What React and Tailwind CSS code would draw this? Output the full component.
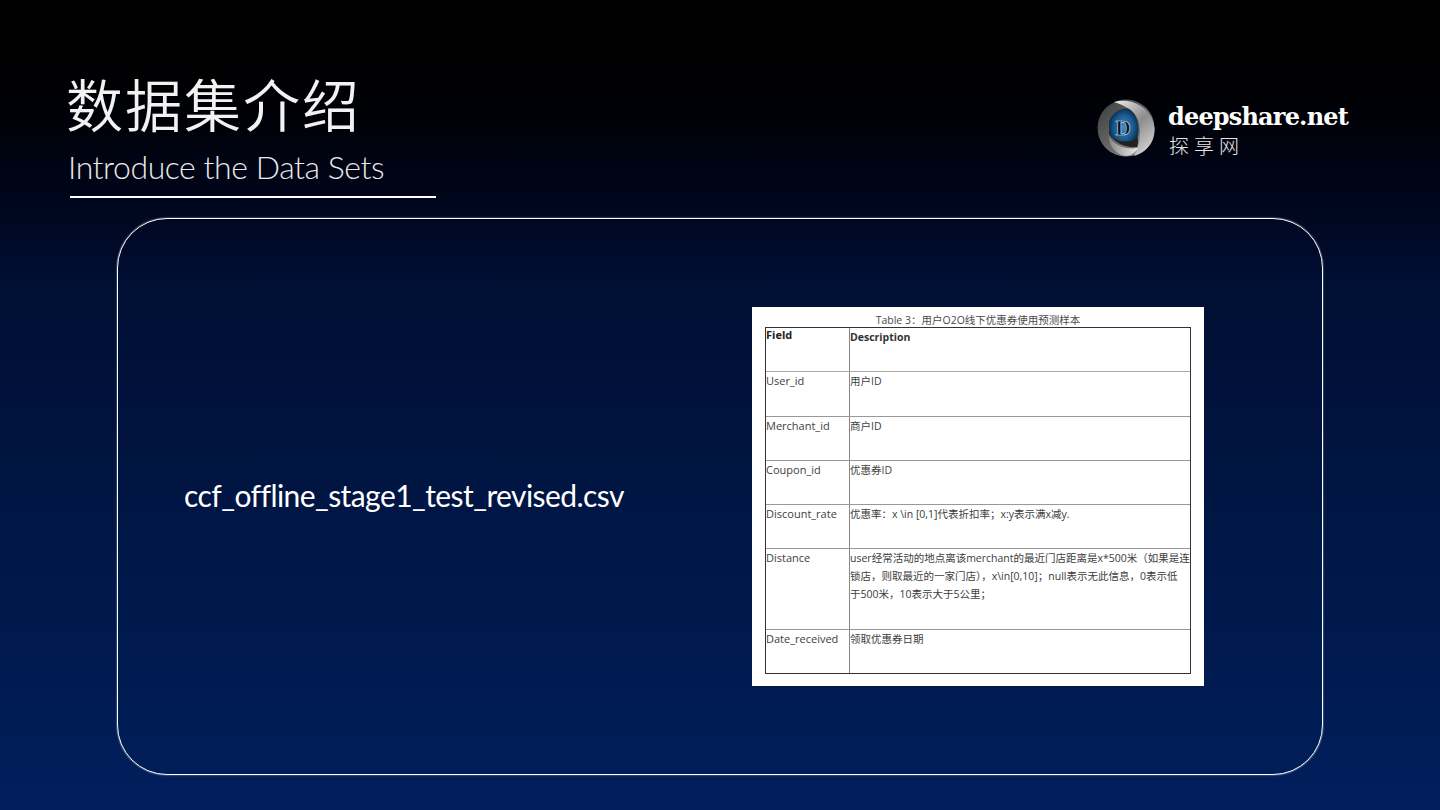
const CJK = '"Noto Sans CJK SC"';

const rows = [
  { field: 'User_id', desc: '用户ID', height: 'h-[45px]' },
  { field: 'Merchant_id', desc: '商户ID', height: 'h-[44px]' },
  { field: 'Coupon_id', desc: '优惠券ID', height: 'h-[44px]' },
  { field: 'Discount_rate', desc: '优惠率：x \\in [0,1]代表折扣率；x:y表示满x减y.', height: 'h-[44px]' },
  {
    field: 'Distance',
    desc: 'user经常活动的地点离该merchant的最近门店距离是x*500米（如果是连\n锁店，则取最近的一家门店），x\\in[0,10]；null表示无此信息，0表示低\n于500米，10表示大于5公里；',
    height: 'h-[81px]',
  },
  { field: 'Date_received', desc: '领取优惠券日期', height: 'h-[43px]' },
];

const Logo = () => (
  <svg width="60" height="60" viewBox="0 0 60 60">
    <defs>
      <linearGradient id="ring" x1="0" y1="0" x2="1" y2="1">
        <stop offset="0" stopColor="#3a3a3a" />
        <stop offset="0.6" stopColor="#6f6f6f" />
        <stop offset="1" stopColor="#a8a8a8" />
      </linearGradient>
      <linearGradient id="swoosh" x1="0.1" y1="0" x2="0.7" y2="1">
        <stop offset="0" stopColor="#e6e6e6" />
        <stop offset="0.5" stopColor="#8c8c8c" />
        <stop offset="1" stopColor="#d0d0d0" />
      </linearGradient>
      <linearGradient id="band" x1="0" y1="0" x2="1" y2="0">
        <stop offset="0" stopColor="#8a8a8a" />
        <stop offset="1" stopColor="#ececec" />
      </linearGradient>
      <radialGradient id="iris" cx="0.5" cy="0.5" r="0.55">
        <stop offset="0" stopColor="#3d8cc9" />
        <stop offset="0.6" stopColor="#1a5a8e" />
        <stop offset="1" stopColor="#0b2440" />
      </radialGradient>
    </defs>
    <circle cx="30" cy="30" r="28.5" fill="url(#ring)" />
    <path d="M18 4 C36 -1 56 10 58.5 30 C59.5 44 50 55 38 58 C44 48 46 32 42 22 C38 12 28 7 18 4 Z" fill="url(#swoosh)" />
    <path d="M13 38 C18 48 30 52 42 50 C40 54 36 57 30 58 C20 57 13 48 13 38 Z" fill="url(#band)" />
    <path d="M13 24 C16 14 26 9 33 11 C41 15 44 28 42 38 C40 44 38 47 36 48 C26 47 17 42 13 36 Z" fill="url(#iris)" />
    <path d="M13 36 C20 44 30 46 42 40 C42 44 42 47 41 49 C30 50 20 46 13 36 Z" fill="#222222" />
    <text x="27" y="37" textAnchor="middle" fontSize="21" fontWeight="700" fontFamily="Liberation Serif, serif" fill="#0a0f1a" stroke="#cfe2f0" strokeWidth="0.6">D</text>
  </svg>
);

export default function App() {
  return (
    <div className="w-[1440px] h-[810px] overflow-hidden bg-gradient-to-b from-[#000000] via-[#000f33] via-[35%] to-[#001f5c] text-white">
      {/* Header */}
      <div className="flex justify-between h-[218px] pl-[66px] pr-[92px]">
        <div className="w-[370px] pt-[66px]">
          <h1 className="text-[57px] leading-[72px] font-[350] tracking-[2px] text-[#f2f2f2]" style={{ fontFamily: CJK + ', sans-serif' }}>
            数据集介绍
          </h1>
          <p className="text-[32px] leading-[44px] font-light tracking-[-0.45px] mt-[7px] ml-[2px] text-[#e8e8e8]" style={{ fontFamily: 'Lato, sans-serif' }}>
            Introduce the Data Sets
          </p>
          <div className="h-[2px] bg-white ml-[4px] mt-[7px]" />
        </div>
        <div className="flex items-start gap-[12px] pt-[98px]">
          <Logo />
          <div className="pt-[1px]">
            <div className="text-[24px] leading-[36px] font-bold text-white tracking-[-0.82px]" style={{ fontFamily: '"DejaVu Serif", serif' }}>
              deepshare.net
            </div>
            <div className="text-[20px] leading-[22px] font-light tracking-[5px] ml-[1px] text-[#e6e6e6]" style={{ fontFamily: CJK + ', sans-serif' }}>
              探享网
            </div>
          </div>
        </div>
      </div>

      {/* Panel */}
      <div className="mx-[117px] h-[557px] rounded-[50px] border border-white shadow-[0_0_1.5px_rgba(255,255,255,0.9)] flex items-start pl-[66px] pt-[88px]">
        <p className="w-[568px] mt-[167px] text-[30px] leading-[42px] tracking-[-0.57px] text-white" style={{ fontFamily: 'Lato, sans-serif' }}>
          ccf_offline_stage1_test_revised.csv
        </p>
        <div className="w-[452px] h-[379px] bg-white px-[13px] text-[#3d3d3d] text-[11px]" style={{ fontFamily: '"Open Sans", ' + CJK + ', sans-serif' }}>
          <div className="h-[20px] leading-[26px] text-center text-[10.5px] text-[#4a4a4a]">Table 3：用户O2O线下优惠券使用预测样本</div>
          <div className="w-[426px] border border-[#333333]">
            <div className="flex h-[44px] border-b border-[#aaaaaa]">
              <div className="w-[83px] font-bold text-[#222222] leading-[14px]">Field</div>
              <div className="flex-1 border-l border-[#888888] font-bold text-[10.5px] text-[#333333] leading-[16px] pt-[1px]">Description</div>
            </div>
            {rows.map((row, i) => (
              <div key={row.field} className={'flex ' + row.height + (i < rows.length - 1 ? ' border-b border-[#999999]' : '')}>
                <div className="w-[83px] leading-[18px]">{row.field}</div>
                <div className="flex-1 border-l border-[#888888] text-[10.5px] leading-[18px] whitespace-pre-line">{row.desc}</div>
              </div>
            ))}
          </div>
        </div>
      </div>
    </div>
  );
}
